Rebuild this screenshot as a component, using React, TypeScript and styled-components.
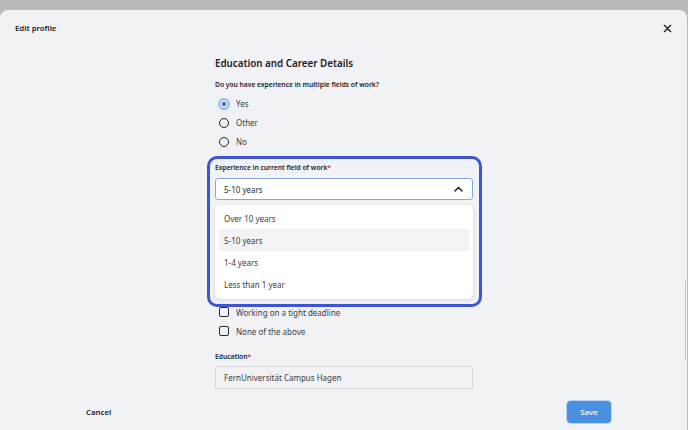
import React from "react";
import styled, { createGlobalStyle } from "styled-components";

const GlobalStyle = createGlobalStyle`
    html, body {
        margin: 0;
        padding: 0;
        background: #b9babe;
        font-family: "Noto Sans", "Open Sans", sans-serif;
        color: #222326;
    }
    * {
        box-sizing: border-box;
    }
`;

const radios = [
    { label: "Yes", checked: true },
    { label: "Other", checked: false },
    { label: "No", checked: false },
];

const options = ["Over 10 years", "5-10 years", "1-4 years", "Less than 1 year"];

const checks = ["Working on a tight deadline", "None of the above"];

export default function App() {
    return (
        <>
            <GlobalStyle />
            <Page>
                <Modal>
                    <Header>
                        <HeaderTitle>Edit profile</HeaderTitle>
                        <CloseButton aria-label="Close">
                            <svg width="9" height="9" viewBox="0 0 10 10">
                                <path d="M1.5 1.5L8.5 8.5M8.5 1.5L1.5 8.5" stroke="#222" strokeWidth="1.5" strokeLinecap="round" />
                            </svg>
                        </CloseButton>
                    </Header>
                    <Body>
                        <Column>
                            <SectionTitle>Education and Career Details</SectionTitle>
                            <Question>Do you have experience in multiple fields of work?</Question>
                            <RadioList>
                                {radios.map((r) => (
                                    <OptionRow key={r.label}>
                                        <Radio $checked={r.checked} />
                                        <OptionText>{r.label}</OptionText>
                                    </OptionRow>
                                ))}
                            </RadioList>
                            <Highlight>
                                <FieldLabel>
                                    Experience in current field of work<Required>*</Required>
                                </FieldLabel>
                                <SelectBox>
                                    <span>5-10 years</span>
                                    <svg width="9" height="6" viewBox="0 0 9 6">
                                        <path d="M1 5L4.5 1.5L8 5" stroke="#222" strokeWidth="1.5" fill="none" strokeLinecap="round" strokeLinejoin="round" />
                                    </svg>
                                </SelectBox>
                                <Menu>
                                    {options.map((o) => (
                                        <MenuItem key={o} $active={o === "5-10 years"}>{o}</MenuItem>
                                    ))}
                                </Menu>
                            </Highlight>
                            <CheckList>
                                {checks.map((c) => (
                                    <CheckRow key={c}>
                                        <CheckBox />
                                        <OptionText>{c}</OptionText>
                                    </CheckRow>
                                ))}
                            </CheckList>
                            <EducationLabel>
                                Education<Required>*</Required>
                            </EducationLabel>
                            <TextInput>FernUniversität Campus Hagen</TextInput>
                        </Column>
                    </Body>
                    <Footer>
                        <CancelButton>Cancel</CancelButton>
                        <SaveButton>Save</SaveButton>
                    </Footer>
                    <ScrollThumb />
                </Modal>
            </Page>
        </>
    );
}

const Page = styled.div`
    height: 430px;
    padding-top: 10px;
    overflow: hidden;
`;

const Modal = styled.div`
    position: relative;
    height: 420px;
    width: 687px;
    background: #f1f2f6;
    border-radius: 8px 8px 0 0;
    display: flex;
    flex-direction: column;
`;

const Header = styled.div`
    height: 36px;
    padding: 0 15px 0 15px;
    display: flex;
    align-items: center;
    justify-content: space-between;
`;

const HeaderTitle = styled.div`
    font-size: 7.8px;
    font-weight: 600;
    color: #1f2024;
`;

const CloseButton = styled.div`
    display: flex;
    align-items: center;
`;

const Body = styled.div`
    flex: 1;
    overflow: hidden;
`;

const Column = styled.div`
    width: 258px;
    margin-left: 215px;
    padding-top: 10px;
    display: flex;
    flex-direction: column;
`;

const SectionTitle = styled.h2`
    margin: 0;
    font-size: 9.8px;
    line-height: 16px;
    font-weight: 600;
    color: #1f2024;
`;

const Question = styled.div`
    margin-top: 8px;
    font-size: 6.7px;
    line-height: 10px;
    font-weight: 600;
`;

const RadioList = styled.div`
    margin-top: 4px;
    display: flex;
    flex-direction: column;
`;

const OptionRow = styled.div`
    height: 19px;
    display: flex;
    align-items: center;
    gap: 7px;
    padding-left: 4px;
`;

const Radio = styled.span<{ $checked: boolean }>`
    width: 10px;
    height: 10px;
    border-radius: 50%;
    border: 1.5px solid ${(p) => (p.$checked ? "#3d7fe0" : "#222")};
    background: ${(p) => (p.$checked ? "radial-gradient(circle, #3d7fe0 0 2.3px, #fff 2.6px)" : "transparent")};
    box-shadow: ${(p) => (p.$checked ? "0 0 0 2px #cfe0f8" : "none")};
`;

const OptionText = styled.span`
    font-size: 8px;
    color: #3a3b3f;
`;

const Highlight = styled.div`
    margin: 5px -9px 0 -8px;
    border: 3px solid #3d55d3;
    border-radius: 10px;
    padding: 4px 6px 5px 5px;
    display: flex;
    flex-direction: column;
    position: relative;
    z-index: 1;
`;

const FieldLabel = styled.div`
    font-size: 6.7px;
    line-height: 10px;
    font-weight: 600;
`;

const Required = styled.span`
    color: #d32f2f;
`;

const SelectBox = styled.div`
    margin-top: 5px;
    height: 22px;
    background: #fff;
    border: 1px solid #86a8dc;
    border-radius: 3px;
    padding: 0 9px 0 8px;
    display: flex;
    align-items: center;
    justify-content: space-between;
    font-size: 8px;
    color: #2a2b2f;
`;

const Menu = styled.div`
    margin-top: 5px;
    height: 94px;
    background: #fff;
    border-radius: 6px;
    box-shadow: 0 1px 4px rgba(0, 0, 0, 0.12);
    padding: 2px 4px;
    display: flex;
    flex-direction: column;
`;

const MenuItem = styled.div<{ $active: boolean }>`
    height: 22px;
    display: flex;
    align-items: center;
    padding-left: 5px;
    border-radius: 2px;
    font-size: 8px;
    color: #3a3b3f;
    background: ${(p) => (p.$active ? "#f3f3f5" : "transparent")};
`;

const CheckList = styled.div`
    display: flex;
    flex-direction: column;
    gap: 9px;
`;

const CheckRow = styled.div`
    height: 10px;
    display: flex;
    align-items: center;
    gap: 7px;
    padding-left: 4px;
`;

const CheckBox = styled.span`
    width: 10px;
    height: 10px;
    border: 1.5px solid #2a2b2f;
    border-radius: 2px;
`;

const EducationLabel = styled(FieldLabel)`
    margin-top: 16px;
`;

const TextInput = styled.div`
    margin-top: 4px;
    height: 23px;
    background: #f2f2f4;
    border: 1px solid #d5d6da;
    border-radius: 2px;
    padding-left: 8px;
    display: flex;
    align-items: center;
    font-size: 8px;
    color: #3a3b3f;
`;

const Footer = styled.div`
    height: 38px;
    padding: 8px 76px 6px 86px;
    display: flex;
    align-items: center;
    justify-content: space-between;
`;

const CancelButton = styled.div`
    font-size: 7.8px;
    font-weight: 600;
    color: #1f2024;
`;

const SaveButton = styled.div`
    width: 44px;
    height: 22px;
    border-radius: 4px;
    background: #4a8fe1;
    box-shadow: 0 0 0 1px #b9d3f3;
    color: #fff;
    font-size: 7.8px;
    font-weight: 500;
    display: flex;
    align-items: center;
    justify-content: center;
`;

const ScrollThumb = styled.div`
    position: absolute;
    right: 1px;
    top: 270px;
    width: 1.5px;
    height: 80px;
    background: #c4c5ca;
    border-radius: 1px;
`;
